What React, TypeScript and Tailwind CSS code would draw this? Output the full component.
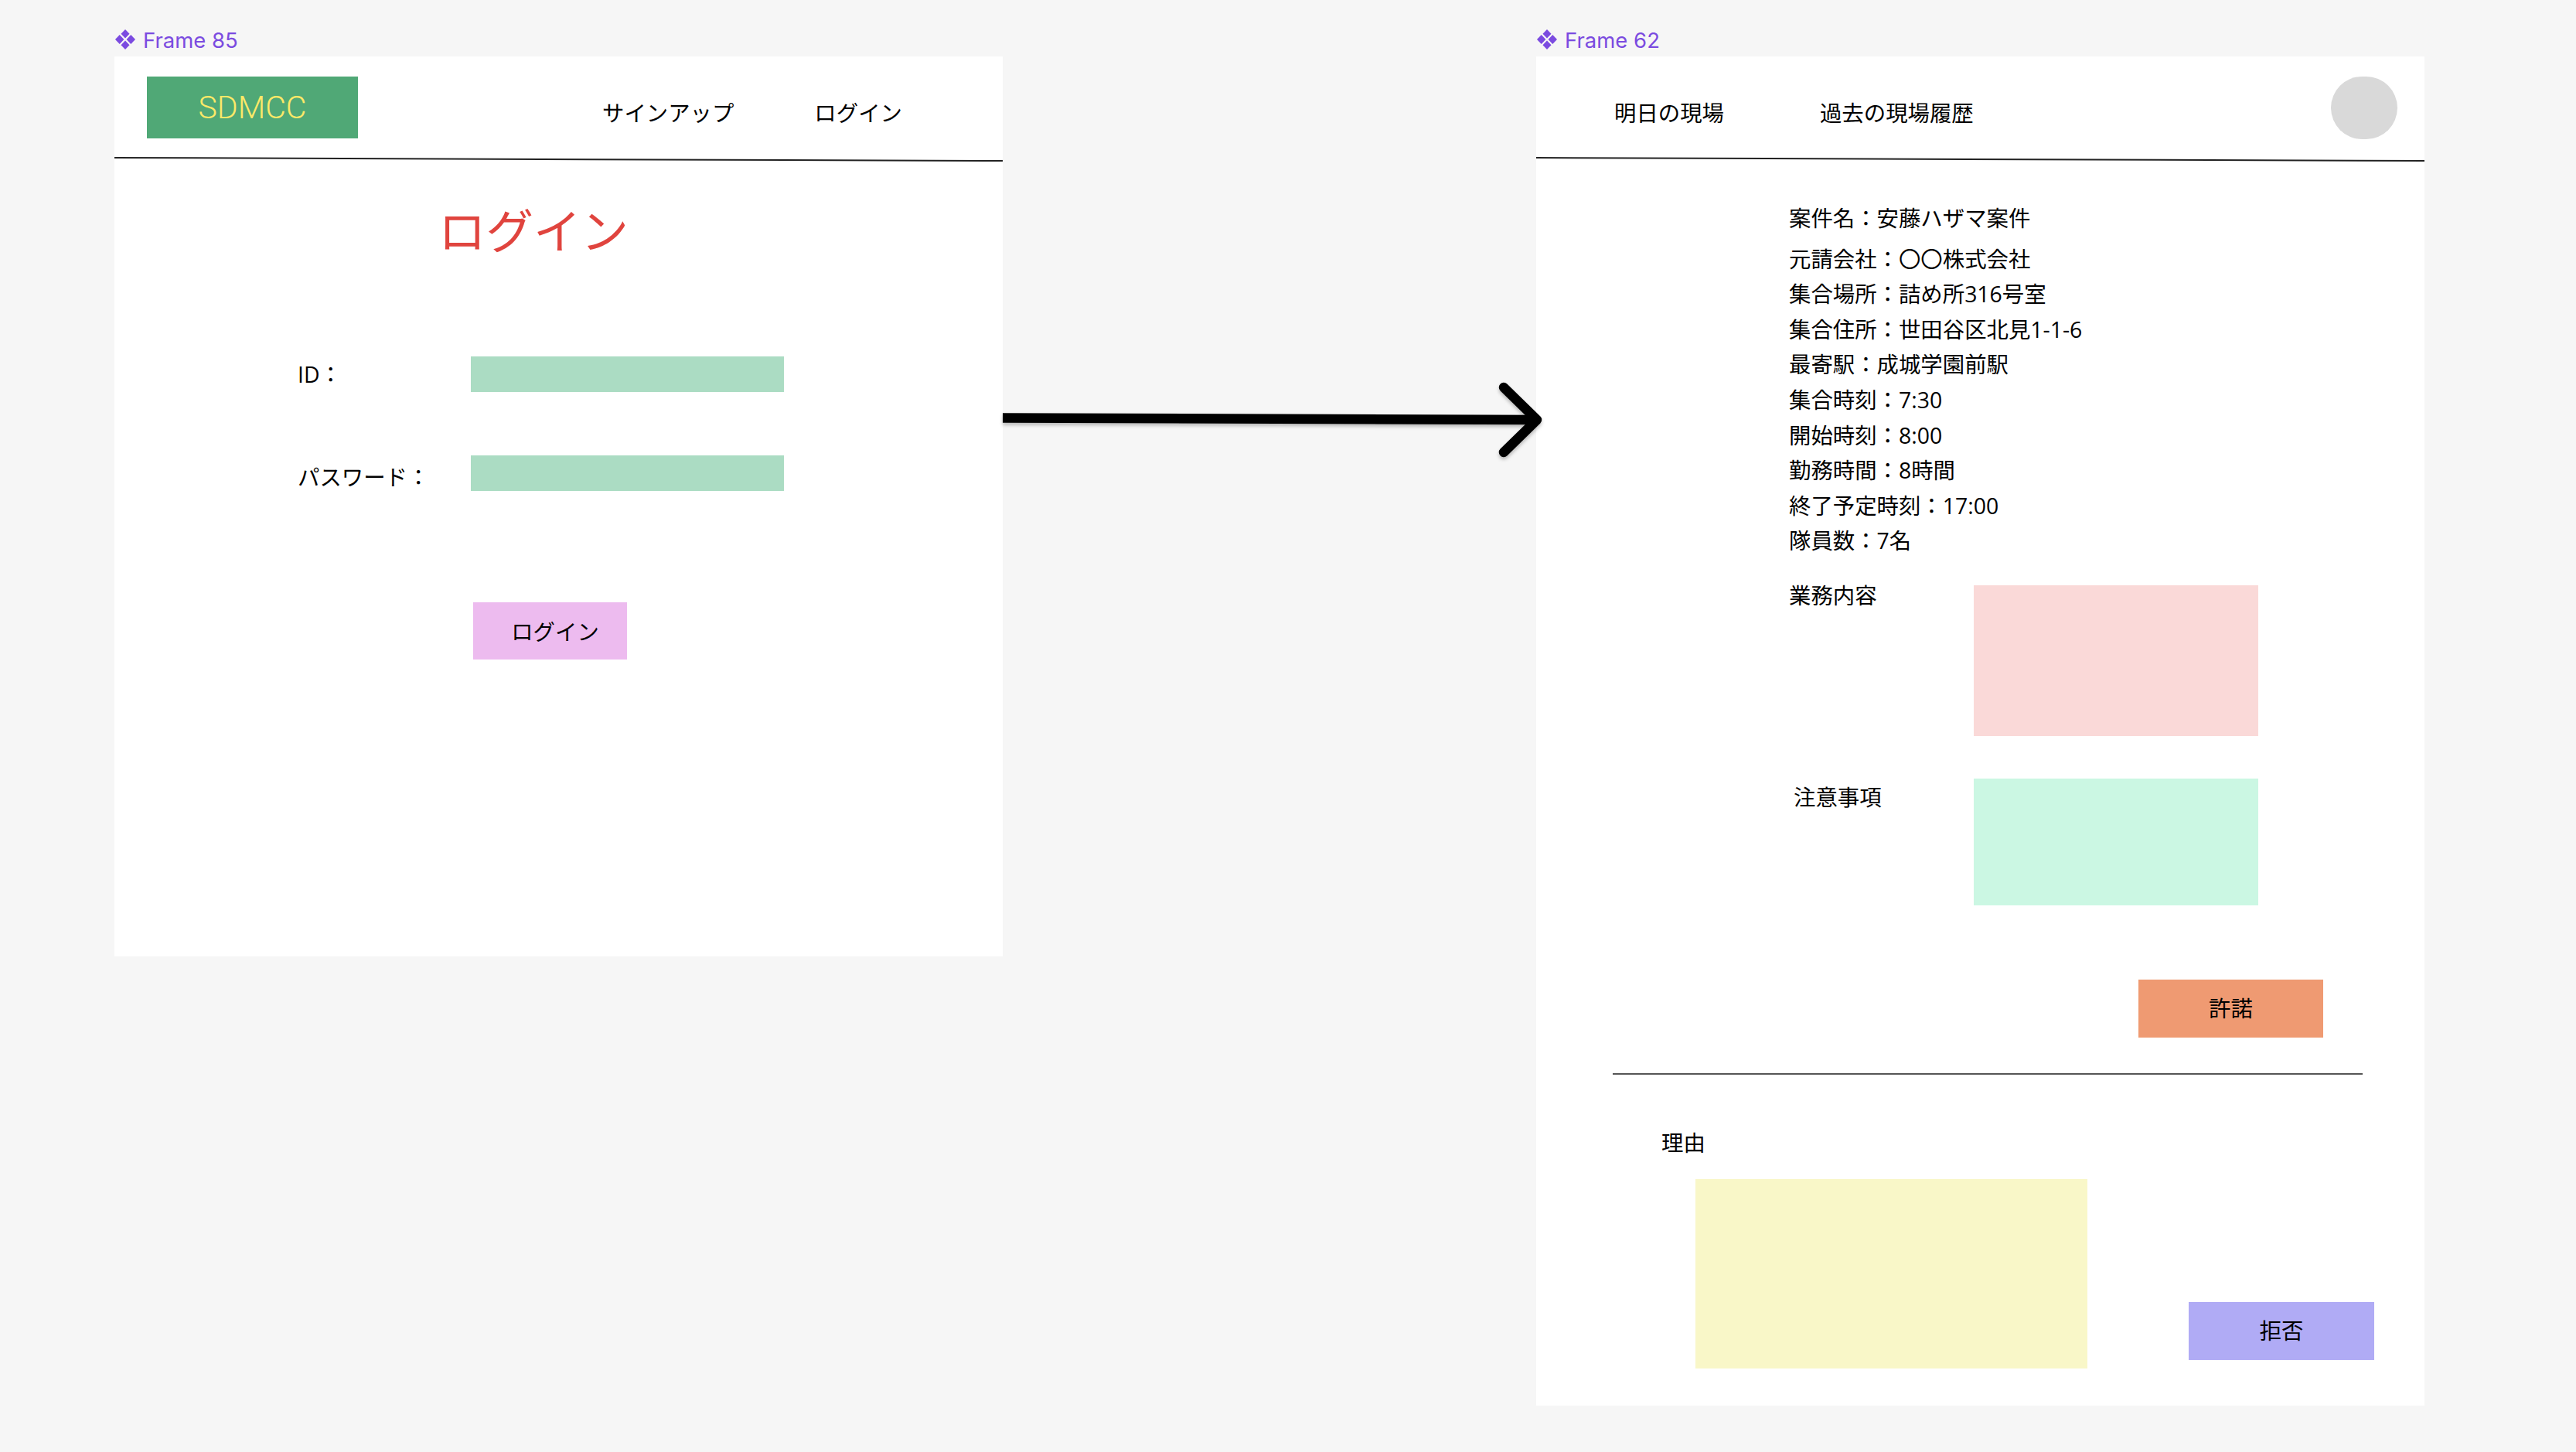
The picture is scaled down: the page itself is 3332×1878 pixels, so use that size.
const font = "[font-family:'Open_Sans','Noto_Sans_CJK_JP',sans-serif]"

const info = [
  "元請会社：〇〇株式会社",
  "集合場所：詰め所316号室",
  "集合住所：世田谷区北見1-1-6",
  "最寄駅：成城学園前駅",
  "集合時刻：7:30",
  "開始時刻：8:00",
  "勤務時間：8時間",
  "終了予定時刻：17:00",
  "隊員数：7名",
]

function FrameLabel({ name }: { name: string }) {
  return (
    <div className="flex h-[73px] items-start gap-[9px] pt-[38px] font-['Inter',sans-serif] text-[27.5px] leading-[28px] text-[#7b4be0]">
      <svg className="-mt-px" width="28" height="28" viewBox="0 0 28 28" fill="currentColor">
        <path d="M14 1l5.5 5.8L14 12.6 8.500 6.800z" />
        <path d="M14 15.400l5.500 5.800L14 27l-5.500-5.800z" />
        <path d="M6.700 8.100L12.400 14l-5.700 5.900L1 14z" />
        <path d="M21.300 8.100L27 14l-5.700 5.900L15.600 14z" />
      </svg>
      <span>{name}</span>
    </div>
  )
}

function HeaderLine() {
  return <div className="h-[2px] w-full rotate-[0.2deg] bg-[#222]" />
}

function LoginFrame() {
  return (
    <div className="w-[1149px]">
      <FrameLabel name="Frame 85" />
      <div className="h-[1164px] bg-white text-[28.4px] leading-[40px] text-black">
        <div className="flex h-[132px] items-start">
          <div className="mt-[26px] ml-[42px] flex h-[80px] w-[273px] items-center justify-center bg-[#50a876] font-['Roboto',sans-serif] text-[41px] font-light text-[#fde968]">
            SDMCC
          </div>
          <span className="mt-[53px] ml-[316px]">サインアップ</span>
          <span className="mt-[53px] ml-[104px]">ログイン</span>
        </div>
        <HeaderLine />
        <h1 className="mt-[51px] ml-[419px] text-[61.5px] leading-[80px] text-[#e0443e]">ログイン</h1>
        <div className="mt-[123px] ml-[237px] flex h-[46px] items-center">
          <span className="w-[224px]">ID：</span>
          <div className="h-[46px] w-[405px] bg-[#abdcc3]" />
        </div>
        <div className="mt-[82px] ml-[237px] flex h-[46px] items-start">
          <span className="mt-[8px] w-[224px]">パスワード：</span>
          <div className="h-[46px] w-[405px] bg-[#abdcc3]" />
        </div>
        <button className="mt-[144px] ml-[464px] flex h-[74px] w-[199px] items-center justify-center bg-[#edbbef] pt-[2px] pl-[13px]">
          ログイン
        </button>
      </div>
    </div>
  )
}

function DetailFrame() {
  return (
    <div className="ml-[690px] w-[1149px]">
      <FrameLabel name="Frame 62" />
      <div className="h-[1745px] bg-white text-[28.4px] leading-[40px] text-black">
        <div className="flex h-[132px] items-start">
          <span className="mt-[53px] ml-[101px]">明日の現場</span>
          <span className="mt-[53px] ml-[124px]">過去の現場履歴</span>
          <div className="mt-[26px] mr-[35px] ml-auto h-[81px] w-[86px] rounded-full bg-[#d9d9d9]" />
        </div>
        <HeaderLine />
        <div className="mt-[53px] ml-[327px] leading-[45.6px]">
          <p className="mb-[7px]">案件名：安藤ハザマ案件</p>
          {info.map((line) => (
            <p key={line}>{line}</p>
          ))}
        </div>
        <div className="mt-[34px] ml-[327px] flex items-start leading-[28px]">
          <span className="-mt-px w-[239px]">業務内容</span>
          <div className="h-[195px] w-[368px] bg-[#fad9d8]" />
        </div>
        <div className="mt-[55px] ml-[333px] flex items-start leading-[28px]">
          <span className="mt-[10px] w-[233px]">注意事項</span>
          <div className="h-[164px] w-[368px] bg-[#cbf7e3]" />
        </div>
        <button className="mt-[96px] ml-[779px] flex h-[75px] w-[239px] items-center justify-center bg-[#ef9a72]">許諾</button>
        <div className="mt-[46px] ml-[99px] h-[2px] w-[970px] bg-[#555]" />
        <p className="mt-[74px] ml-[162px] leading-[28px]">理由</p>
        <div className="mt-[33px] ml-[206px] flex items-end">
          <div className="h-[245px] w-[507px] bg-[#f9f7c8]" />
          <button className="mb-[11px] ml-[131px] flex h-[75px] w-[240px] items-center justify-center bg-[#b0abf5]">拒否</button>
        </div>
      </div>
    </div>
  )
}

export default function App() {
  return (
    <div className={`relative flex h-[1878px] w-[3332px] items-start overflow-hidden bg-[#f6f6f6] pl-[148px] ${font}`}>
      <LoginFrame />
      <DetailFrame />
      <svg
        className="absolute top-[480px] left-[1290px] drop-shadow-[0_3px_2px_rgba(0,0,0,0.25)]"
        width="710"
        height="120"
        viewBox="0 0 710 120"
        fill="none"
        stroke="black"
        strokeWidth="12.500"
      >
        <path d="M7 60.500L698 63" />
        <path d="M655 21L698 63L655 105" strokeLinecap="round" strokeLinejoin="round" />
      </svg>
    </div>
  )
}
